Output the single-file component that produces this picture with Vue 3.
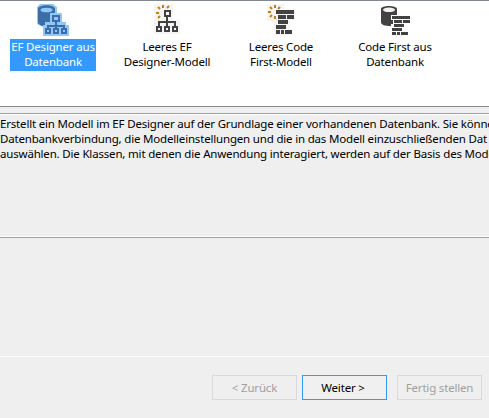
<script setup>
const templates = [
  { id: 'designer-db', view: '35 3 36 35', lines: ['EF Designer aus', 'Datenbank'], selected: true },
  { id: 'designer-empty', view: '149 3 36 35', lines: ['Leeres EF', 'Designer-Modell'] },
  { id: 'code-empty', view: '263 3 36 35', lines: ['Leeres Code', 'First-Modell'] },
  { id: 'code-db', view: '377 3 36 35', lines: ['Code First aus', 'Datenbank'] },
]
const description = [
  'Erstellt ein Modell im EF Designer auf der Grundlage einer vorhandenen Datenbank. Sie könne',
  'Datenbankverbindung, die Modelleinstellungen und die in das Modell einzuschließenden Dat',
  'auswählen. Die Klassen, mit denen die Anwendung interagiert, werden auf der Basis des Mode',
]
</script>

<template>
  <main class="wizard">
    <section class="list">
      <div v-for="t in templates" :key="t.id" class="item" :class="{ selected: t.selected }">
        <svg class="icon" width="36" height="35" :viewBox="t.view">
          <g v-if="t.id === 'designer-db'">
            <path fill="#91c8fb" d="M40 4H53L57 7V13H62V22H66V25H69V36H43V27L37 24V7Z" />
            <path fill="#3a6ea5" d="M38 9C38 4 55 4 55 9V13H50V22H45V25H43V26C40 25.500 38 24 38 22Z" />
            <ellipse cx="46.500" cy="10" rx="6" ry="2.300" fill="#91c8fb" />
            <path fill="none" stroke="#3a6ea5" stroke-width="2" d="M53 16H59V21H53ZM56 22V28M48 28V26H64V28M46 29H50V33H46ZM54 29H58V33H54ZM62 29H66V33H62Z" />
          </g>
          <g v-if="t.id === 'designer-empty'">
            <path fill="#f5f5f5" d="M154 4H173V20H180V34H154Z" />
            <path fill="none" stroke="#424242" stroke-width="2" d="M165 11H170V16H165ZM167 17V26M159 26V22H175V26M157 27H161V31H157ZM165 27H169V31H165ZM173 27H177V31H173Z" />
            <path fill="none" stroke="#ca7b12" stroke-width="2" d="M163 5V8M158 7L160 9M156 13H159M158 18L160 16M169 6L167 8" />
          </g>
          <g v-if="t.id === 'code-empty'">
            <path fill="#f5f5f5" d="M267 4H284V9H295V20H290V35H274V21H267Z" />
            <path fill="#424242" d="M276 10H294V14H276ZM278 15H286V19H278ZM287 15H294V19H287ZM278 20H288V24H278ZM276 25H286V29H276ZM276 30H280V34H276ZM281 30H284V34H281ZM285 30H292V34H285Z" />
            <path fill="none" stroke="#ca7b12" stroke-width="2" d="M275 5V8M270 7L272 9M268 12H271M270 17L272 15M275 16V19M280 7L278 9" />
          </g>
          <g v-if="t.id === 'code-db'">
            <path fill="#424242" d="M381 9C381 5 397 5 397 9V15H391V20H393V24H391V26C385 26 381 25 381 22Z" />
            <ellipse cx="389" cy="9.800" rx="6" ry="2.300" fill="#f2f2f2" />
            <path fill="#424242" d="M392 16H410V19H392ZM394 20H402V23H394ZM403 20H410V23H403ZM394 24H404V27H394ZM392 28H402V31H392ZM392 32H396V35H392ZM397 32H400V35H397ZM401 32H408V35H401Z" />
          </g>
        </svg>
        <div class="label"><span v-for="l in t.lines" :key="l">{{ l }}</span></div>
      </div>
    </section>
    <section class="description">
      <p v-for="l in description" :key="l">{{ l }}</p>
    </section>
    <section class="blank"></section>
    <footer class="footer">
      <button class="btn" disabled>&lt; Zurück</button>
      <button class="btn primary">Weiter &gt;</button>
      <button class="btn finish" disabled>Fertig stellen</button>
    </footer>
  </main>
</template>

<style>
body { margin: 0; overflow: hidden; }
</style>

<style scoped>
.wizard {
  box-sizing: border-box;
  width: 489px;
  height: 418px;
  overflow: hidden;
  display: flex;
  flex-direction: column;
  background: #efefef;
  color: #000;
  font: 11.5px/15px "Noto Sans", "Open Sans", sans-serif;
  letter-spacing: -0.18px;
}
.list {
  box-sizing: border-box;
  height: 107px;
  flex: none;
  display: flex;
  align-items: flex-start;
  padding: 2px 0 0 10px;
  gap: 28px;
  background: #fff;
  border-top: 1px solid #828790;
  border-bottom: 1px solid #828790;
}
.item { width: 86px; display: flex; flex-direction: column; align-items: center; }
.icon { display: block; }
.label {
  box-sizing: border-box;
  width: 86px;
  height: 32px;
  margin-top: 1px;
  display: flex;
  flex-direction: column;
  align-items: center;
  white-space: nowrap;
}
.selected .label { background: #3399ff; color: #fff; }
.description {
  box-sizing: border-box;
  height: 124px;
  flex: none;
  margin-top: 6px;
  padding-top: 2px;
  border-top: 1px solid #a0a0a0;
  box-shadow: inset 0 1px #fff;
  border-bottom: 1px solid #fff;
}
.description p { margin: 0; white-space: nowrap; }
.blank {
  box-sizing: border-box;
  height: 120px;
  flex: none;
  border-top: 1px solid #a0a0a0;
  border-bottom: 1px solid #fff;
}
.footer { display: flex; justify-content: flex-end; padding: 18px 7px 0 0; }
.btn {
  box-sizing: border-box;
  width: 85px;
  height: 25px;
  margin-left: 5px;
  padding: 0;
  border: 1px solid #d9d9d9;
  background: #efefef;
  color: #a0a0a0;
  font: inherit;
  letter-spacing: inherit;
}
.primary { border-color: #3399ff; color: #000; background: #f0f0f0; padding-right: 3px; }
.finish { margin-left: 10px; }
</style>
